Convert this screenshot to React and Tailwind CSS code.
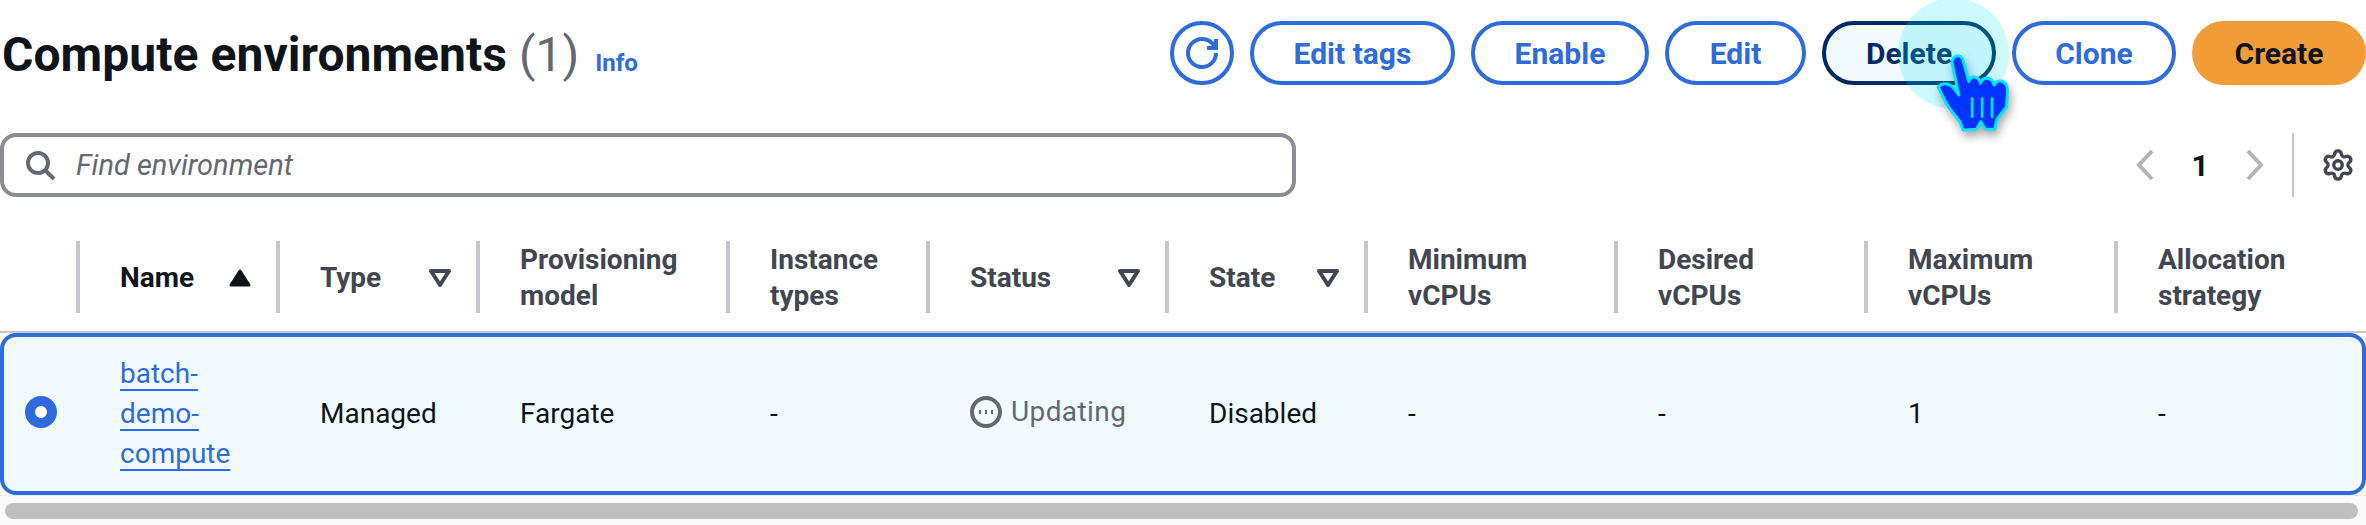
import React from "react";

const font = { fontFamily: 'Roboto, sans-serif' };

function Btn({ children, className = "" }) {
  return (
    <button className={"h-[64px] rounded-full border-[4px] border-[#2f6bdc] text-[#2f6bdc] bg-white text-[30px] font-bold flex items-center justify-center " + className}>
      {children}
    </button>
  );
}

function FilterIcon() {
  return (
    <svg width="32" height="32" viewBox="0 0 16 16" className="shrink-0">
      <path d="M3.5 5h9L8 12z" fill="none" stroke="#424650" strokeWidth="2" strokeLinejoin="round" />
    </svg>
  );
}

function HeadCell({ children, icon }) {
  return (
    <div className={"h-[72px] flex items-center justify-between border-l-[4px] border-[#c6c6cd] pl-[40px] pr-[20px] text-[28px] leading-[36px] font-bold text-[#424650]"}>
      <span className="pt-[2px]">{children}</span>
      {icon}
    </div>
  );
}

export default function App() {
  return (
    <div className="relative w-[2366px] h-[525px] bg-white overflow-hidden text-[#0f141a]" style={font}>
      <div className="flex items-center justify-between pt-[21px] h-[85px]">
        <div className="flex items-baseline pl-[2px] pt-[4px]">
          <h1 className="text-[48px] font-bold leading-[64px] tracking-[0.05px]">Compute environments</h1>
          <span className="text-[48px] text-[#656871] ml-[12px]">(1)</span>
          <span className="text-[24px] font-bold text-[#2f6bdc] ml-[16px]">Info</span>
        </div>
        <div className="flex gap-[16px]">
          <Btn className="w-[64px]">
            <svg width="32" height="32" viewBox="0 0 16 16" fill="none" stroke="#2f6bdc" strokeWidth="2">
              <path d="M15 8c0 3.87-3.13 7-7 7s-7-3.13-7-7 3.13-7 7-7c2.79 0 5.2 1.63 6.33 4" />
              <path d="M15 1v4.5h-4.5" />
            </svg>
          </Btn>
          <Btn className="w-[205px]">Edit tags</Btn>
          <Btn className="w-[178px]">Enable</Btn>
          <Btn className="w-[141px]">Edit</Btn>
          <Btn className="w-[174px] !border-[#002a66] !text-[#002a66] !bg-[#f2fbff]">Delete</Btn>
          <Btn className="w-[164px]">Clone</Btn>
          <Btn className="w-[174px] !border-[#f29d38] !bg-[#f29d38] !text-[#0f141a]">Create</Btn>
        </div>
      </div>

      <div className="flex items-center justify-between mt-[48px] h-[64px]">
        <div className="w-[1296px] h-[64px] rounded-[16px] border-[4px] border-[#8c8c94] flex items-center pl-[20px] gap-[20px]">
          <svg width="32" height="32" viewBox="0 0 16 16" fill="none" stroke="#656871" strokeWidth="2">
            <circle cx="7" cy="7" r="5" />
            <path d="M15 15l-4.5-4.5" />
          </svg>
          <span className="italic text-[29px] text-[#656871] pt-[2px]">Find environment</span>
        </div>
        <div className="flex items-center h-[64px] pr-[11px]">
          <svg width="26" height="36" viewBox="0 0 13 18" fill="none" stroke="#b4b4bb" strokeWidth="2">
            <path d="M10 2L3.5 9l6.5 7" />
          </svg>
          <span className="w-[84px] text-center text-[30px] font-bold">1</span>
          <svg width="26" height="36" viewBox="0 0 13 18" fill="none" stroke="#b4b4bb" strokeWidth="2">
            <path d="M3 2l6.5 7L3 16" />
          </svg>
          <div className="w-[2px] h-[64px] bg-[#c6c6cd] ml-[24px] mr-[27px]" />
          <svg width="34" height="34" viewBox="0 0 24 24" fill="none" stroke="#424650" strokeWidth="2.4" strokeLinecap="round" strokeLinejoin="round">
            <path d="M9.671 4.136a2.34 2.34 0 0 1 4.659 0 2.34 2.34 0 0 0 3.319 1.915 2.34 2.34 0 0 1 2.33 4.033 2.34 2.34 0 0 0 0 3.831 2.34 2.34 0 0 1-2.33 4.033 2.34 2.34 0 0 0-3.319 1.915 2.34 2.34 0 0 1-4.659 0 2.34 2.34 0 0 0-3.32-1.915 2.34 2.34 0 0 1-2.33-4.033 2.34 2.34 0 0 0 0-3.831A2.34 2.34 0 0 1 6.35 6.051a2.34 2.34 0 0 0 3.319-1.915" />
            <circle cx="12" cy="12" r="3" />
          </svg>
        </div>
      </div>

      <div className="mt-[44px] grid grid-cols-[76px_200px_200px_250px_200px_239px_199px_250px_250px_250px_1fr]">
        <div />
        <HeadCell icon={
          <svg width="32" height="32" viewBox="0 0 16 16" className="shrink-0">
            <path d="M3.5 12h9L8 5z" fill="#0f141a" stroke="#0f141a" strokeWidth="1.5" strokeLinejoin="round" />
          </svg>
        }><span className="text-[#0f141a]">Name</span></HeadCell>
        <HeadCell icon={<FilterIcon />}>Type</HeadCell>
        <HeadCell>Provisioning<br />model</HeadCell>
        <HeadCell>Instance<br />types</HeadCell>
        <HeadCell icon={<FilterIcon />}>Status</HeadCell>
        <HeadCell icon={<FilterIcon />}>State</HeadCell>
        <HeadCell>Minimum<br />vCPUs</HeadCell>
        <HeadCell>Desired<br />vCPUs</HeadCell>
        <HeadCell>Maximum<br />vCPUs</HeadCell>
        <HeadCell>Allocation<br />strategy</HeadCell>
      </div>

      <div className="mt-[18px] h-[2px] bg-[#c6c6cd]" />

      <div className="h-[162px] border-[4px] border-[#2f6bdc] rounded-[16px] bg-[#f2fbff] items-center text-[28px] leading-[40px] grid grid-cols-[72px_200px_200px_250px_200px_239px_199px_250px_250px_250px_1fr]">
        <div className="flex pl-[21px] -mt-[4px]">
          <div className="w-[32px] h-[32px] rounded-full border-[10px] border-[#2f6bdc] bg-white" />
        </div>
        <div className="pl-[44px]">
          <a className="text-[#2f6bdc] underline underline-offset-[6px] decoration-[2px]">batch-<br />demo-<br />compute</a>
        </div>
        <div className="pl-[44px]">Managed</div>
        <div className="pl-[44px]">Fargate</div>
        <div className="pl-[44px]">-</div>
        <div className="pl-[44px] -mt-[4px] flex items-center gap-[9px] text-[#656871] tracking-[0.4px]">
          <svg width="32" height="32" viewBox="0 0 16 16" fill="none" stroke="#656871" strokeWidth="2" className="shrink-0">
            <circle cx="8" cy="8" r="7" />
            <path d="M4.5 8h1M7.5 8h1M10.5 8h1" />
          </svg>
          Updating
        </div>
        <div className="pl-[44px]">Disabled</div>
        <div className="pl-[44px]">-</div>
        <div className="pl-[44px]">-</div>
        <div className="pl-[44px]">1</div>
        <div className="pl-[44px]">-</div>
      </div>

      <div className="h-[30px] bg-[#fafafa] border-t-[1px] border-[#ebebeb] pt-[7px] px-[5px]">
        <div className="h-[16px] rounded-full bg-[#bfbfbf] w-[2353px]" />
      </div>

      <div className="absolute left-[1898px] top-[-2px] w-[111px] h-[111px] rounded-full bg-[#00e5ff]/20" />
      <svg className="absolute left-[1931px] top-[50px] drop-shadow-[2px_5px_5px_rgba(0,0,0,0.35)]" width="81" height="84" viewBox="150 150 240 252">
        <path
          d="M170 262C180 248 200 248 215 262L232 285L212 190C210 165 240 158 245 182L262 245C268 225 292 226 297 250C302 230 330 228 338 255C345 235 378 240 378 270L375 320L345 360L340 388L312 388L298 365L285 388L245 390L235 365L200 320Z"
          fill="#0033ff" stroke="#00e5ff" strokeWidth="9" strokeLinejoin="round"
        />
        <path d="M272 295V350M302 295V350M332 295V350" stroke="#00e5ff" strokeWidth="8" strokeLinecap="round" fill="none" />
      </svg>
    </div>
  );
}
